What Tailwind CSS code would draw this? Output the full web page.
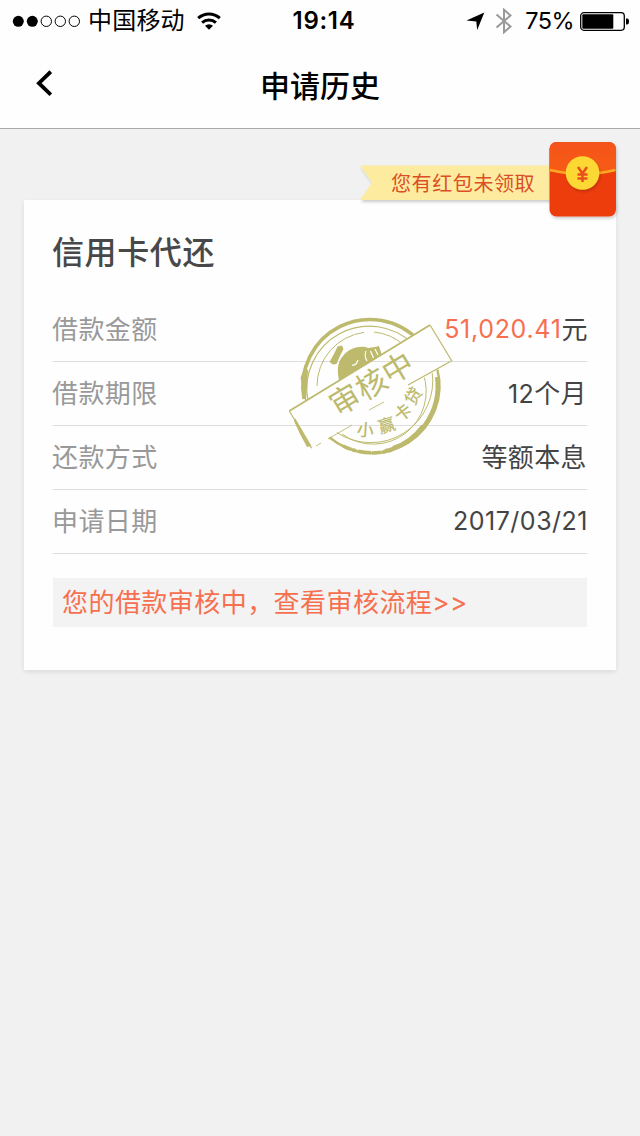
<!DOCTYPE html>
<html lang="zh-CN">

<head>
    <meta charset="UTF-8" />
    <meta name="viewport" content="width=device-width, initial-scale=1" />
    <title>申请历史</title>
    <script src="https://cdn.jsdelivr.net/npm/@tailwindcss/browser@4"></script>
</head>

<body class="bg-[#f1f1f1] min-h-screen overflow-hidden font-['Inter','Noto_Sans_CJK_SC',sans-serif]">
    <header class="bg-[#fefefe] h-[129px] border-b border-[#a9a9a9]">
        <!-- Status bar -->
        <div class="h-10 grid grid-cols-[1fr_auto_1fr] items-center text-2xl leading-10 text-black">
            <div class="flex items-center pl-3">
                <svg class="w-[69px] h-3" viewBox="0 0 69 12">
                    <circle cx="6.3" cy="6.3" r="5.5" />
                    <circle cx="20.3" cy="6.3" r="5.5" />
                    <g fill="none" stroke="#000" stroke-width="1">
                        <circle cx="34.3" cy="6.3" r="5.2" />
                        <circle cx="48.3" cy="6.3" r="5.2" />
                        <circle cx="62.3" cy="6.3" r="5.2" />
                    </g>
                </svg>
                <span class="ml-[7px] pt-0.5 h-10 leading-9 tracking-[0.2px]">中国移动</span>
                <svg class="ml-3 w-6 h-[18px]" viewBox="0 0 24 18" fill="none" stroke="#000" stroke-width="3">
                    <path d="M1.2 6.2a16 16 0 0 1 21.6 0" />
                    <path d="M5.1 10.6a10.3 10.3 0 0 1 13.8 0" />
                    <path d="M12 17.8l-4-4.1a6 6 0 0 1 8 0z" fill="#000" stroke="none" />
                </svg>
            </div>
            <div class="font-semibold text-[24px] tracking-[0.7px] pt-px pl-2">19:14</div>
            <div class="flex items-center justify-end pr-[11px] pt-px">
                <svg class="w-[19px] h-[19px]" viewBox="0 0 19 19">
                    <path d="M18.3 0.5L11.2 18L10.3 9.5L0.5 8.5z" />
                </svg>
                <svg class="ml-[10px] w-[18px] h-[26px]" viewBox="0 0 18 26" fill="none" stroke="#999" stroke-width="2">
                    <path d="M1.5 6.5L15.5 18.5L9 24.3V1.7L15.5 7.5L1.5 19.5" />
                </svg>
                <span class="ml-3 text-[23.5px] tracking-[-0.6px]">75%</span>
                <svg class="ml-[6px] w-[49px] h-[19px]" viewBox="0 0 49 19">
                    <rect x="0.7" y="0.7" width="43.6" height="17.6" rx="3.2" fill="none" stroke="#000" stroke-width="1.3" />
                    <rect x="2.3" y="2.3" width="31" height="14.4" rx="1" />
                    <path d="M46 6.5h1q2 0 2 3t-2 3h-1z" />
                </svg>
            </div>
        </div>
        <!-- Title bar -->
        <div class="h-22 grid grid-cols-[1fr_auto_1fr] items-center">
            <svg class="ml-9 w-4 h-7" viewBox="0 0 16 28" fill="none" stroke="#000" stroke-width="3.8">
                <path d="M14.8 1.7L2.9 13.2L14.8 24.7" />
            </svg>
            <h1 class="pt-1 text-[30px] font-medium text-black">申请历史</h1>
        </div>
    </header>

    <main class="relative pt-[71px] px-6">
        <section class="bg-[#fefefe] h-[470px] px-[29px] pt-[29px] shadow-[0_2px_5px_rgba(0,0,0,0.09)]">
            <h2 class="h-[69px] -ml-px pt-px leading-[46px] text-[32px] tracking-[0.6px] font-medium text-[#484848]">信用卡代还</h2>

            <dl class="relative text-[26px] tracking-[0.4px] text-[#444]">
                <div class="h-16 flex justify-between leading-[63px] border-b border-[#ddd]">
                    <dt class="-ml-px text-[#999]">借款金额</dt>
                    <dd class="flex -mr-px"><span class="text-[#f6704f] text-[25px] tracking-[0.7px]">51,020.41</span><span>元</span></dd>
                </div>
                <div class="h-16 flex justify-between leading-[63px] border-b border-[#ddd]">
                    <dt class="-ml-px text-[#999]">借款期限</dt>
                    <dd><span class="text-[25px]">12</span>个月</dd>
                </div>
                <div class="h-16 flex justify-between leading-[63px] border-b border-[#ddd]">
                    <dt class="-ml-px text-[#999]">还款方式</dt>
                    <dd>等额本息</dd>
                </div>
                <div class="h-16 flex justify-between leading-[63px] border-b border-[#ddd]">
                    <dt class="-ml-px text-[#999]">申请日期</dt>
                    <dd class="-mr-px text-[25px] tracking-[0.5px]">2017/03/21</dd>
                </div>

                <!-- Review stamp laid over the rows -->
                <svg class="absolute left-[227px] top-3 w-[180px] h-[150px]" viewBox="0 0 180 150" fill="none" stroke="#bdba6d">
                    <defs>
                        <clipPath id="outside">
                            <path clip-rule="evenodd" d="M0 0H180V150H0Z M9.3 101L150 15L171.7 50.7L31.7 138.3Z" />
                        </clipPath>
                    </defs>
                    <g clip-path="url(#outside)">
                        <path d="M24 89A67 67 0 0 1 139 31" stroke-width="3.6" />
                        <path d="M28 91A62.5 62.5 0 0 1 133 34" stroke-width="1.2" />
                        <path d="M24 58L20.5 68L22.5 76L22 86L26 91L28 60Z" fill="#bdba6d" stroke="none" />
                        <path d="M37 76A54 54 0 0 1 84 22.4M94 22A54 54 0 0 1 125 36" stroke-width="1" />
                        <path d="M157 58A67 67 0 0 1 49 127" stroke-width="2.4" />
                        <path d="M157 67A67 67 0 0 1 105 141" stroke-width="4" />
                        <path d="M143 116Q130 133 113 138" stroke-width="4" />
                        <path d="M63 136A67 67 0 0 0 112 140" stroke-width="3.5" stroke-dasharray="9 1 4 2 13 1" />
                        <path d="M152 61A62 62 0 0 1 56 122" stroke-width="1" />
                        <path d="M143 63A53 53 0 0 1 62 124" stroke-width="1" />
                        <!-- Money bag -->
                        <g fill="#bdba6d" stroke="none">
                            <path d="M49.5 52L55 42L57.5 36.5L62 35.5L63.5 39L60 46L56.5 54L53 54.5Z" />
                            <path d="M60 74C56 60 58 51 63 46C69 37 83 35 88 38L95 37L99 36L101.5 44L103 50L88 62L61 76Z" />
                        </g>
                        <path d="M86 41Q84 46 87 51M90.500 41L93.500 48M95 39L98 45M72 55Q76 56 78 50" stroke="#fefefe" stroke-width="1.2" />
                    </g>
                    <path d="M9.3 101L150 15" stroke-width="1.8" />
                    <path d="M150 15L171.7 50.7L128 75" stroke-width="1.2" />
                    <path d="M9.3 101L31.7 138.3" stroke-width="1.2" />
                    <path d="M15 108L31.5 136L27 137L20 124L14 111Z" fill="#bdba6d" stroke="none" />
                    <path d="M36 136L41 133M48 129L72 115M89 100L104 92" stroke-width="0.9" />
                    <g fill="#bdba6d" stroke="none">
                        <text transform="translate(57.5 107) rotate(-31)" font-size="30.5" letter-spacing="0.3" font-weight="400">审核中</text>
                        <g font-size="17" font-weight="500" text-anchor="middle" letter-spacing="0">
                            <text transform="translate(85.5 120) rotate(4)" y="6">小</text>
                            <text transform="translate(106.5 115.5) rotate(-17)" y="6">赢</text>
                            <text transform="translate(123 102.5) rotate(-38)" y="6">卡</text>
                            <text transform="translate(133.5 86) rotate(-58)" y="6">贷</text>
                        </g>
                    </g>
                </svg>
            </dl>

            <a href="#" class="mt-6 pl-[9px] h-[49px] block leading-[49px] bg-[#f3f3f3] text-[26px] tracking-[0.45px] text-[#f6704f]">您的借款审核中，查看审核流程&gt;&gt;</a>
        </section>

        <!-- Red packet reminder -->
        <a href="#" class="absolute right-[22px] top-[11px] w-[260px] h-[80px]">
            <svg class="w-full h-full overflow-visible" viewBox="358 140 260 80">
                <defs>
                    <linearGradient id="packet" x1="0" y1="0" x2="0" y2="1">
                        <stop offset="0" stop-color="#f4541a" />
                        <stop offset="1" stop-color="#f85c14" />
                    </linearGradient>
                    <filter id="soft" x="-20%" y="-20%" width="140%" height="150%">
                        <feDropShadow dx="1" dy="2" stdDeviation="1.5" flood-opacity="0.2" />
                    </filter>
                </defs>
                <path d="M360 165.5H552V200H360L372 182.5Z" fill="#fdeca0" filter="url(#soft)" />
                <rect x="549.5" y="142" width="66.5" height="74.5" rx="7" fill="#ee3d10" filter="url(#soft)" />
                <path d="M549.5 170V149a7 7 0 0 1 7-7h52.5a7 7 0 0 1 7 7V170Q583 179 549.5 170Z" fill="url(#packet)" />
                <path d="M550 170Q583 178 615.5 170" fill="none" stroke="#fba922" stroke-width="2.5" />
                <circle cx="582.5" cy="173" r="16.8" fill="#fdd835" filter="url(#soft)" />
                <path d="M578 167L582.5 173.5L587 167M577.5 174.5H587.5M577.5 178.5H587.5M582.5 173V182" fill="none" stroke="#e8501c" stroke-width="2.5" />
                <text x="391" y="190.5" font-size="20" letter-spacing="0.6" fill="#dc4f25">您有红包未领取</text>
            </svg>
        </a>
    </main>
</body>

</html>
